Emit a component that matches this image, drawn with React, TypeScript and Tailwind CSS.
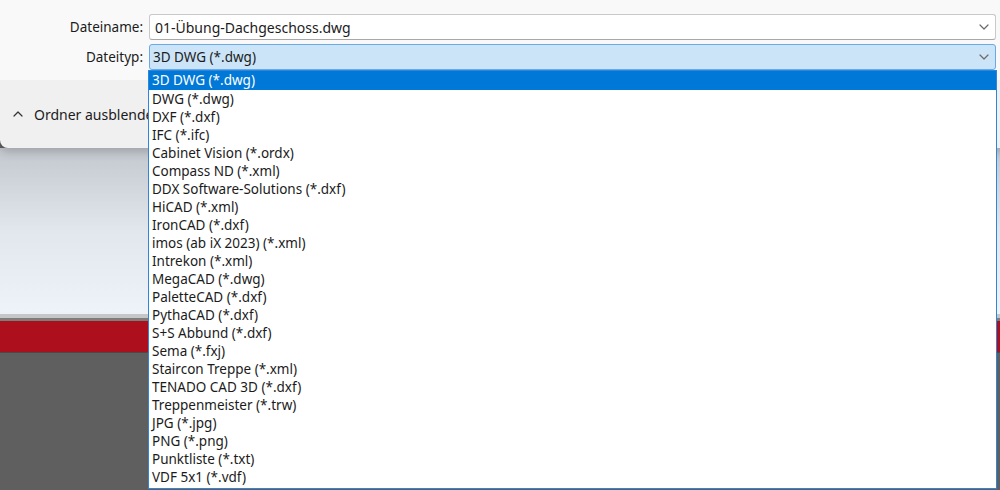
import React from "react";

const items = [
  "3D DWG (*.dwg)",
  "DWG (*.dwg)",
  "DXF (*.dxf)",
  "IFC (*.ifc)",
  "Cabinet Vision (*.ordx)",
  "Compass ND (*.xml)",
  "DDX Software-Solutions (*.dxf)",
  "HiCAD (*.xml)",
  "IronCAD (*.dxf)",
  "imos (ab iX 2023) (*.xml)",
  "Intrekon (*.xml)",
  "MegaCAD (*.dwg)",
  "PaletteCAD (*.dxf)",
  "PythaCAD (*.dxf)",
  "S+S Abbund (*.dxf)",
  "Sema (*.fxj)",
  "Staircon Treppe (*.xml)",
  "TENADO CAD 3D (*.dxf)",
  "Treppenmeister (*.trw)",
  "JPG (*.jpg)",
  "PNG (*.png)",
  "Punktliste (*.txt)",
  "VDF 5x1 (*.vdf)",
];

function Chevron({ up = false, className = "" }: { up?: boolean; className?: string }) {
  return (
    <svg width="10" height="6" viewBox="0 0 10 6" className={className}>
      <polyline
        points={up ? "1,5 5,1 9,5" : "1,1 5,5 9,1"}
        fill="none"
        stroke="currentColor"
        strokeWidth="1.2"
        strokeLinecap="round"
        strokeLinejoin="round"
      />
    </svg>
  );
}

export default function App() {
  return (
    <div
      className="relative w-[1000px] h-[490px] overflow-hidden bg-[#5f5f5f]"
      style={{ fontFamily: '"Noto Sans", "Open Sans", sans-serif' }}
    >
      {/* dialog */}
      <div className="w-[1004px] rounded-bl-[8px] overflow-hidden shadow-[0_4px_10px_rgba(0,0,0,0.18)] relative z-10">
        <div className="h-[80px] bg-[#f9f9f9] pt-[14px] flex flex-col gap-[4px]">
          <div className="flex items-center h-[26px]">
            <div className="w-[143px] text-right text-[13.5px] text-[#1b1b1b]">Dateiname:</div>
            <div className="ml-[6px] w-[847px] h-[26px] bg-white border border-[#c9c9c9] border-b-[#a8a8a8] rounded-[3px] flex items-center justify-between pl-[5px] pr-[6px]">
              <span className="text-[14px] text-[#1b1b1b]">01-Übung-Dachgeschoss.dwg</span>
              <Chevron className="text-[#6b6b6b]" />
            </div>
          </div>
          <div className="flex items-center h-[26px]">
            <div className="w-[143px] text-right text-[13.5px] text-[#1b1b1b]">Dateityp:</div>
            <div className="ml-[6px] w-[847px] h-[26px] bg-[#cce4f7] border border-[#6aa9e6] rounded-[3px] flex items-center justify-between pl-[3px] pr-[6px]">
              <span className="text-[13.5px] text-[#1b1b1b]">3D DWG (*.dwg)</span>
              <Chevron className="text-[#6b6b6b]" />
            </div>
          </div>
        </div>
        <div className="h-[68px] bg-[#f0f0f0] flex items-center pl-[13px] gap-[11px]">
          <Chevron up className="text-[#333]" />
          <span className="text-[14px] text-[#1b1b1b]">Ordner ausblenden</span>
        </div>
      </div>

      {/* background window */}
      <div className="h-[166px] bg-gradient-to-b from-[#c3c7ce] via-[#e2e6ed] to-[#eef3fa]" />
      <div className="h-[4px] bg-[#c6c6c6]" />
      <div className="h-[3px] bg-[#7d7d7d]" />
      <div className="h-[31px] bg-[#ad0f1c]" />
      <div className="h-[1px] bg-[#4a4a4a]" />

      {/* dropdown list */}
      <div className="absolute left-[148px] top-[70px] w-[849px] h-[419px] bg-white border border-[#2b86dc] z-20">
        {items.map((t, i) => (
          <div
            key={t}
            className={
              i === 0
                ? "h-[19px] bg-[#0078d7] text-white text-[13.5px] leading-[19px] pl-[3px]"
                : "h-[18px] text-[#1b1b1b] text-[13.5px] leading-[18px] pl-[3px]"
            }
          >
            {t}
          </div>
        ))}
      </div>
    </div>
  );
}
